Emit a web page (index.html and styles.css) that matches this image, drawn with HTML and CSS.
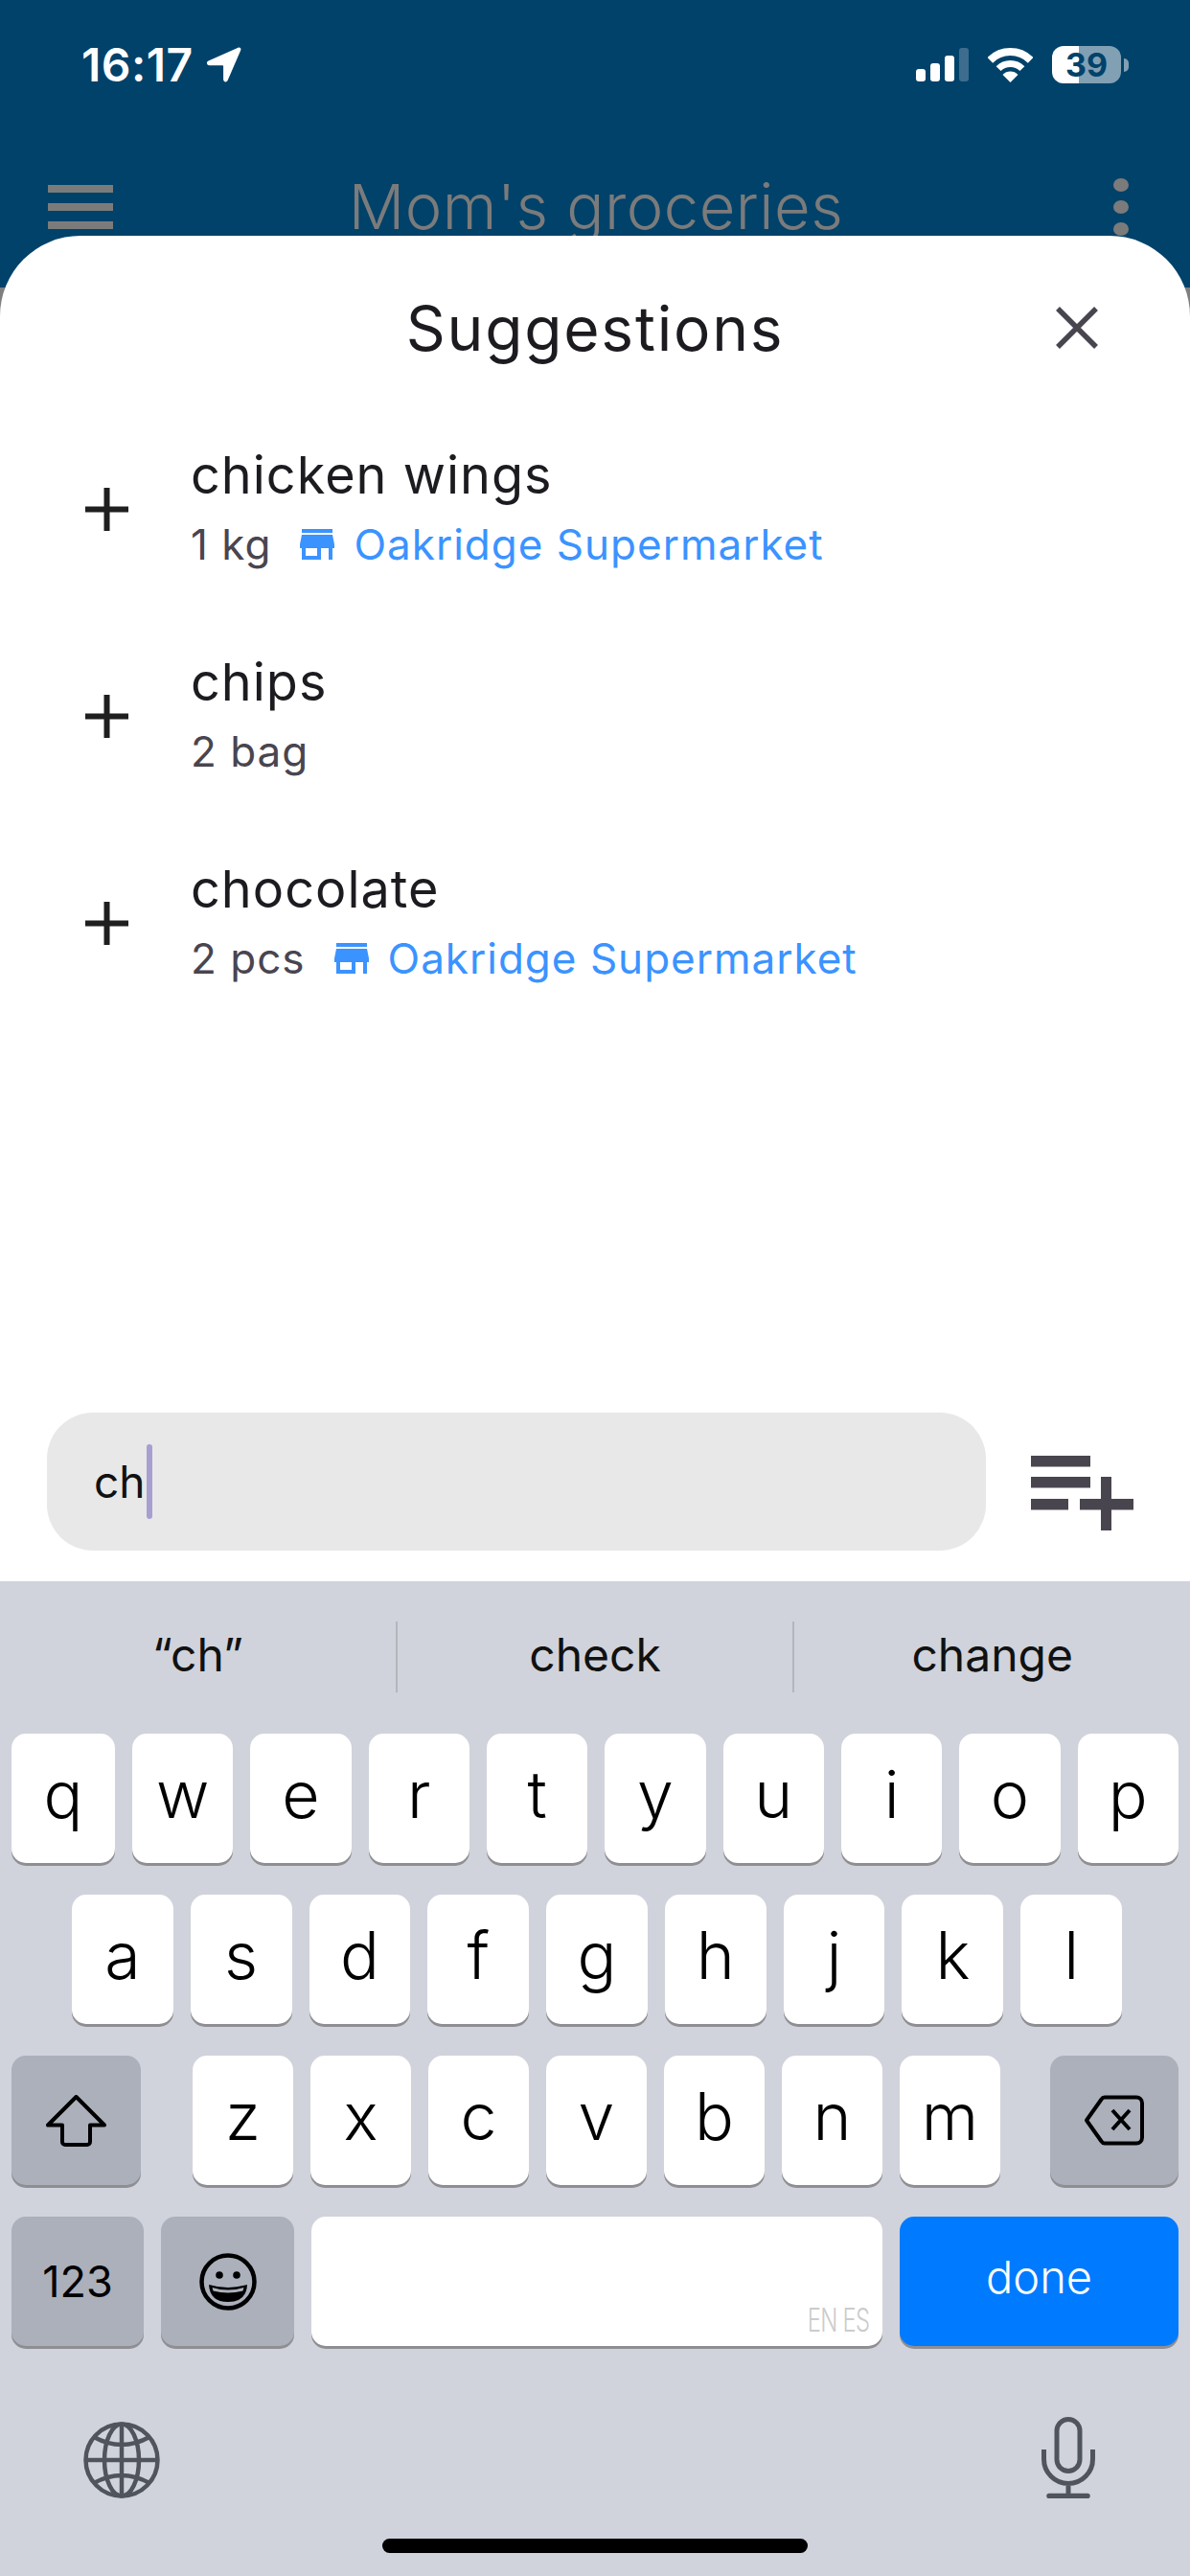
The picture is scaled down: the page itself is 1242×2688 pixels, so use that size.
FILE: index.html
```html
<!DOCTYPE html>
<html lang="en">
<head>
    <meta charset="UTF-8">
    <meta name="viewport" content="width=device-width, initial-scale=1.0">
    <title>Mom's groceries</title>
    <link rel="stylesheet" href="styles.css">
</head>
<body>
<div class="screen">
    <div class="appbar">
        <div class="status">
            <div class="clock">
                <span>16:17</span>
                <svg class="arrow" width="37" height="37" viewBox="0 0 37 37"><path d="M33.5.8 2.5 14.6c-2.6 1.2-1.8 4.6 1 4.6h13.6c.6 0 1 .4 1 1v13.6c0 2.8 3.4 3.6 4.6 1L36.2 3.5c.9-1.9-.8-3.6-2.7-2.7z" fill="#fff"/></svg>
            </div>
            <div class="status-right">
                <div class="signal">
                    <span class="bar b1"></span><span class="bar b2"></span><span class="bar b3"></span><span class="bar b4"></span>
                </div>
                <svg class="wifi" width="47" height="36" viewBox="0 0 47 36">
                    <path d="M2.3 12.8A30 30 0 0 1 44.7 12.8" fill="none" stroke="#fff" stroke-width="8"/>
                    <path d="M11.1 21.6A17.5 17.5 0 0 1 35.9 21.6" fill="none" stroke="#fff" stroke-width="7"/>
                    <path d="M15.5 28a11 11 0 0 1 16 0L23.5 36z" fill="#fff"/>
                </svg>
                <div class="battery">39</div>
                <span class="nub"></span>
            </div>
        </div>
        <div class="toolbar">
            <div class="menu"><span></span><span></span><span></span></div>
            <div class="app-title">Mom's groceries</div>
            <div class="kebab"><span></span><span></span><span></span></div>
        </div>
    </div>

    <div class="sheet">
        <div class="sheet-head">
            <h1>Suggestions</h1>
            <svg class="close" width="44" height="44" viewBox="0 0 44 44"><path d="M2 2 42 42M42 2 2 42" stroke="#49454f" stroke-width="5.5"/></svg>
        </div>

        <div class="items">
            <div class="item">
                <svg class="plus" width="45" height="45" viewBox="0 0 45 45"><path d="M0 22.5H45M22.5 0V45" stroke="#1f1f1f" stroke-width="6"/></svg>
                <div class="item-text">
                    <div class="item-name">chicken wings</div>
                    <div class="item-sub">
                        <span class="qty">1 kg</span>
                        <svg class="store" width="48" height="48" viewBox="0 0 24 24"><path d="M20 4H4v2h16V4zm1 10v-2l-1-5H4l-1 5v2h1v6h10v-6h4v6h2v-6h1zm-9 4H6v-4h6v4z" fill="#3b93ff"/></svg>
                        <span class="shop">Oakridge Supermarket</span>
                    </div>
                </div>
            </div>
            <div class="item">
                <svg class="plus" width="45" height="45" viewBox="0 0 45 45"><path d="M0 22.5H45M22.5 0V45" stroke="#1f1f1f" stroke-width="6"/></svg>
                <div class="item-text">
                    <div class="item-name">chips</div>
                    <div class="item-sub">
                        <span class="qty">2 bag</span>
                    </div>
                </div>
            </div>
            <div class="item">
                <svg class="plus" width="45" height="45" viewBox="0 0 45 45"><path d="M0 22.5H45M22.5 0V45" stroke="#1f1f1f" stroke-width="6"/></svg>
                <div class="item-text">
                    <div class="item-name">chocolate</div>
                    <div class="item-sub">
                        <span class="qty">2 pcs</span>
                        <svg class="store" width="48" height="48" viewBox="0 0 24 24"><path d="M20 4H4v2h16V4zm1 10v-2l-1-5H4l-1 5v2h1v6h10v-6h4v6h2v-6h1zm-9 4H6v-4h6v4z" fill="#3b93ff"/></svg>
                        <span class="shop">Oakridge Supermarket</span>
                    </div>
                </div>
            </div>
        </div>

        <div class="entry">
            <div class="field"><span>ch</span><span class="caret"></span></div>
            <svg class="add-list" width="107" height="78" viewBox="0 0 107 78">
                <path d="M0 0H62V11.500H0zM0 22H62V33.500H0zM0 45H39V56.500H0zM51 45H73V22H84V45H107V56.500H84V78H73V56.500H51z" fill="#49454f"/>
            </svg>
        </div>
    </div>

    <div class="keyboard">
        <div class="predict">
            <div class="word">“ch”</div>
            <div class="word sep">check</div>
            <div class="word sep">change</div>
        </div>
        <div class="rows">
            <div class="row row-top">
                <div class="key first">q</div><div class="key">w</div><div class="key">e</div><div class="key">r</div><div class="key">t</div><div class="key">y</div><div class="key">u</div><div class="key">i</div><div class="key">o</div><div class="key">p</div>
            </div>
            <div class="row row-mid">
                <div class="key">a</div><div class="key">s</div><div class="key">d</div><div class="key">f</div><div class="key">g</div><div class="key">h</div><div class="key">j</div><div class="key">k</div><div class="key">l</div>
            </div>
            <div class="row">
                <div class="key fn shift">
                    <svg width="63" height="54" viewBox="0 0 63 54"><path d="M31.500 2 2 31.500H17V49a3 3 0 0 0 3 3H43a3 3 0 0 0 3-3V31.500H61z" fill="none" stroke="#000" stroke-width="4" stroke-linejoin="round"/></svg>
                </div>
                <div class="key">z</div><div class="key">x</div><div class="key">c</div><div class="key">v</div><div class="key">b</div><div class="key">n</div><div class="key">m</div>
                <div class="key fn back">
                    <svg width="64" height="53" viewBox="0 0 64 53"><path d="M22 2.500H55a6 6 0 0 1 6 6V44.500a6 6 0 0 1-6 6H22a4 4 0 0 1-3.400-2L3 26.500 18.600 4.500a4 4 0 0 1 3.400-2z" fill="none" stroke="#000" stroke-width="4" stroke-linejoin="round"/><path d="M30 16 48 36M48 16 30 36" stroke="#000" stroke-width="4"/></svg>
                </div>
            </div>
            <div class="row">
                <div class="key fn num">123</div>
                <div class="key fn emoji">
                    <svg width="60" height="60" viewBox="0 0 60 60">
                        <circle cx="30" cy="30" r="27.500" fill="none" stroke="#000" stroke-width="4.500"/>
                        <circle cx="21" cy="23" r="3.800"/><circle cx="39" cy="23" r="3.800"/>
                        <path d="M10 33Q30 39 50 33Q49 51 30 51Q11 51 10 33z"/>
                        <path d="M13.500 36Q30 41 46.500 36L45.500 39.500Q30 43.500 14.500 39.500z" fill="#abb0bb"/>
                    </svg>
                </div>
                <div class="key space"><span class="lang">EN ES</span></div>
                <div class="key done">done</div>
            </div>
        </div>
        <div class="kb-bottom">
            <svg class="globe" width="80" height="80" viewBox="0 0 80 80" fill="none" stroke="#50545c" stroke-width="4.500">
                <circle cx="40" cy="40" r="37.500"/>
                <ellipse cx="40" cy="40" rx="18" ry="37.500"/>
                <path d="M40 2.500V77.500M2.500 40H77.500M11 16Q40 32 69 16M11 64Q40 48 69 64"/>
            </svg>
            <svg class="mic" width="56" height="85" viewBox="0 0 56 85" fill="none" stroke="#50545c" stroke-width="5">
                <rect x="16" y="2.500" width="24" height="54" rx="12"/>
                <path d="M2.500 34V44a25.500 25.500 0 0 0 51 0V34M28 70V82"/>
                <path d="M8 82.500H48" stroke-width="5.500" stroke-linecap="round"/>
            </svg>
        </div>
        <div class="home-bar"></div>
    </div>
</div>
</body>
</html>
```

FILE: styles.css
```css
* {
    box-sizing: border-box;
}
body {
    margin: 0;
    font-family: Inter, "Noto Sans", sans-serif;
}
.screen {
    position: relative;
    width: 1242px;
    height: 2688px;
    overflow: hidden;
    background: #7f7f7f;
}

/* app bar behind the sheet */
.appbar {
    height: 300px;
    padding-top: 48px;
    background: #01426a;
}
.status {
    display: flex;
    justify-content: space-between;
    align-items: center;
    height: 39px;
    padding: 0 64px 0 85px;
}
.clock {
    display: flex;
    align-items: center;
    gap: 13px;
    color: #fff;
    font-size: 48px;
    font-weight: 600;
    letter-spacing: .5px;
}
.status-right {
    display: flex;
    align-items: center;
}
.signal {
    display: flex;
    align-items: flex-end;
    gap: 5px;
    height: 35px;
    margin-right: 20px;
}
.bar {
    width: 10px;
    background: #fff;
    border-radius: 3px;
}
.b1 { height: 13px; }
.b2 { height: 19px; }
.b3 { height: 27px; }
.b4 { height: 35px; background: #3c6d8e; }
.wifi {
    margin-right: 20px;
}
.battery {
    width: 72px;
    height: 39px;
    border-radius: 12px;
    background: linear-gradient(to right, #fff 39%, #81a0b4 39%);
    color: #01426a;
    font-size: 34px;
    font-weight: 700;
    line-height: 39px;
    text-align: center;
}
.nub {
    width: 5px;
    height: 14px;
    margin-left: 3px;
    background: #81a0b4;
    border-radius: 0 7px 7px 0;
}
.toolbar {
    display: flex;
    align-items: center;
    justify-content: space-between;
    height: 60px;
    margin-top: 99px;
    padding: 0 64px 0 50px;
}
.menu {
    display: flex;
    flex-direction: column;
    justify-content: space-between;
    width: 68px;
    height: 46px;
}
.menu span {
    height: 8px;
    background: #7b7b7b;
}
.app-title {
    margin-right: 36px;
    color: #7b7b7b;
    font-size: 65px;
    font-weight: 300;
    line-height: 60px;
    letter-spacing: .5px;
}
.kebab {
    display: flex;
    flex-direction: column;
    gap: 9px;
}
.kebab span {
    width: 16px;
    height: 14px;
    border-radius: 50%;
    background: #7b7b7b;
}

/* bottom sheet */
.sheet {
    position: absolute;
    top: 246px;
    left: 0;
    width: 100%;
    height: 1404px;
    display: flex;
    flex-direction: column;
    background: #fff;
    border-radius: 84px 84px 0 0;
}
.sheet-head {
    position: relative;
    display: flex;
    align-items: center;
    justify-content: center;
    height: 192px;
}
.sheet-head h1 {
    margin: 0;
    color: #1d1b20;
    font-size: 64px;
    font-weight: 400;
    letter-spacing: 1.8px;
}
.close {
    position: absolute;
    right: 96px;
    top: 74px;
}
.items {
    display: flex;
    flex-direction: column;
    gap: 30px;
}
.item {
    display: flex;
    align-items: center;
    gap: 65px;
    height: 186px;
    padding-left: 89px;
}
.item-text {
    display: flex;
    flex-direction: column;
    gap: 10px;
}
.item-name {
    color: #1d1b20;
    font-size: 54px;
    font-weight: 400;
    line-height: 60px;
    letter-spacing: 1px;
}
.item-sub {
    display: flex;
    align-items: center;
    height: 60px;
    padding-top: 3px;
    font-size: 44px;
    letter-spacing: 1px;
}
.qty {
    color: #49454f;
    margin-right: 24px;
}
.store {
    margin-right: 14px;
}
.shop {
    color: #3b93ff;
}
.entry {
    display: flex;
    margin-top: auto;
    padding: 0 0 32px 49px;
}
.field {
    display: flex;
    align-items: center;
    width: 980px;
    height: 144px;
    padding-left: 49px;
    background: #e8e8e8;
    border-radius: 48px;
    color: #111;
    font-size: 46px;
}
.caret {
    width: 6px;
    height: 78px;
    margin-left: 2px;
    border-radius: 3px;
    background: #a89fd0;
}
.add-list {
    margin: 45px 0 0 47px;
}

/* keyboard */
.keyboard {
    position: absolute;
    top: 1650px;
    left: 0;
    width: 100%;
    height: 1038px;
    background: #d0d3db;
}
.predict {
    display: flex;
    align-items: center;
    height: 159px;
    padding-bottom: 2px;
}
.word {
    flex: 1;
    height: 74px;
    line-height: 70px;
    text-align: center;
    color: #111;
    font-size: 48px;
}
.sep {
    border-left: 2px solid #b4b6bc;
}
.rows {
    display: flex;
    flex-direction: column;
    gap: 33px;
}
.row {
    display: flex;
    gap: 18px;
    padding: 0 12px;
}
.row-mid {
    padding: 0 71px 0 75px;
}
.key {
    flex: 1;
    display: flex;
    align-items: center;
    justify-content: center;
    height: 135px;
    padding-bottom: 10px;
    background: #fff;
    border-radius: 15px;
    box-shadow: 0 3px 0 #8e8e93;
    color: #000;
    font-size: 68px;
    font-weight: 300;
}
.first {
    flex: 0 0 108px;
}
.fn {
    flex: 0 0 auto;
    padding-bottom: 0;
    background: #abb0bb;
}
.shift {
    width: 135px;
    margin-right: 36px;
}
.back {
    width: 134px;
    margin-left: 34px;
}
.num {
    width: 138px;
    font-size: 45px;
    font-weight: 400;
}
.emoji {
    width: 139px;
}
.space {
    position: relative;
}
.lang {
    position: absolute;
    right: 14px;
    bottom: 7px;
    color: #ccc;
    font-size: 34px;
    letter-spacing: -1px;
    transform: scaleX(.7);
    transform-origin: right;
    white-space: nowrap;
}
.done {
    flex: 0 0 291px;
    padding-bottom: 10px;
    background: #007aff;
    color: #fff;
    font-size: 47px;
}
.kb-bottom {
    display: flex;
    justify-content: space-between;
    align-items: flex-end;
    height: 159px;
    padding: 0 99px 0 87px;
}
.home-bar {
    width: 444px;
    height: 15px;
    margin: 42px auto 0;
    background: #000;
    border-radius: 8px;
}
```
